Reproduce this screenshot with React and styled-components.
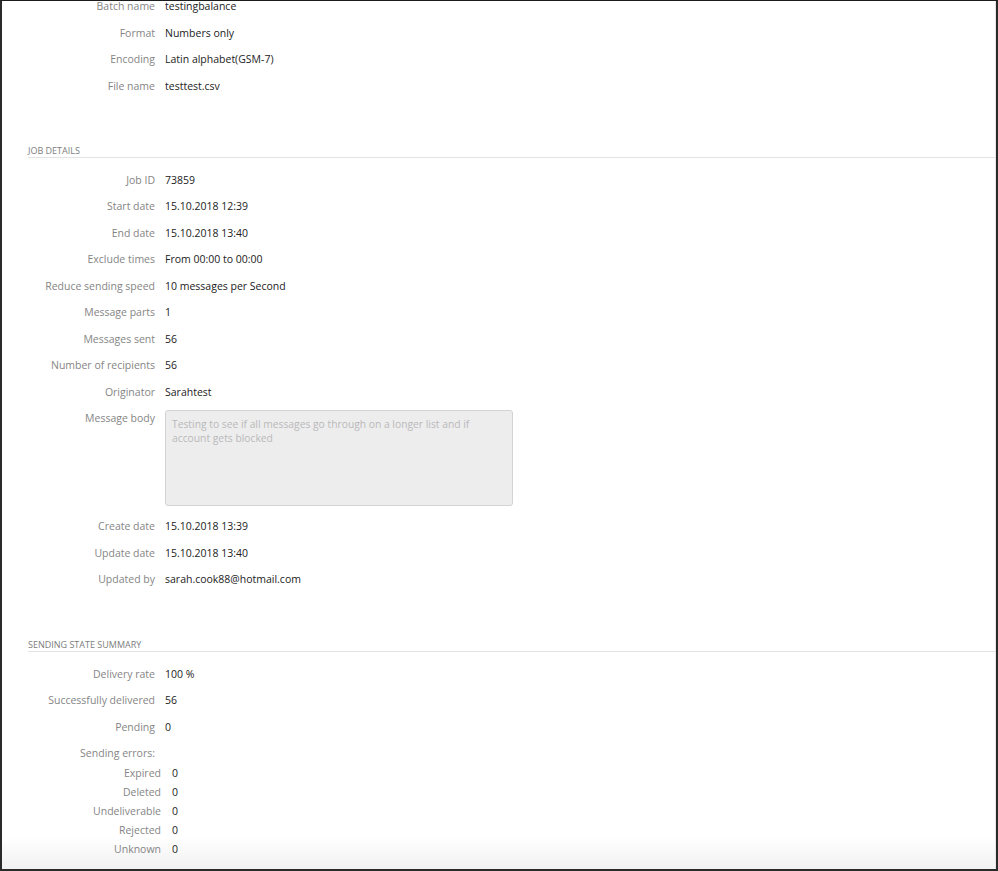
import styled, { createGlobalStyle } from "styled-components";

const GlobalStyle = createGlobalStyle`
  html, body {
    margin: 0;
    padding: 0;
    background: #fff;
  }
  body {
    font-family: "Open Sans", "Liberation Sans", Arial, sans-serif;
  }
`;

const Frame = styled.div`
  box-sizing: border-box;
  width: 998px;
  height: 871px;
  overflow: hidden;
  border-top: 1px solid #1c1c1c;
  border-left: 2px solid #2a2a2a;
  border-right: 2px solid #2a2a2a;
  border-bottom: 2px solid #2a2a2a;
  box-shadow: inset -1px 0 0 #e6e6e6;
  background: linear-gradient(to bottom, #fff calc(100% - 32px), #f1f1f1);
`;

const Content = styled.div`
  margin-top: -8px;
`;

const Section = styled.div`
  margin-top: ${(p) => p.$gap || 0}px;
`;

const SectionTitle = styled.div`
  margin-left: 26px;
  font-size: 9px;
  line-height: 12px;
  color: #7d7d7d;
  text-transform: uppercase;
  padding-top: 1px;
  border-bottom: 1px solid #e3e3e3;
  margin-bottom: 8.75px;
`;

const Row = styled.div`
  display: flex;
  align-items: flex-start;
  gap: 10px;
  padding: 5px 0 ${(p) => (p.$tight ? 0 : 5)}px;
  font-size: 10.5px;
  line-height: 16.5px;
`;

const Label = styled.div`
  width: 153px;
  flex: none;
  text-align: right;
  color: #858585;
`;

const Value = styled.div`
  color: #222;
`;

const SubRow = styled.div`
  display: flex;
  gap: 11px;
  height: 19px;
  align-items: center;
  font-size: 10.5px;
  line-height: 16px;
`;

const SubLabel = styled.div`
  width: 159px;
  flex: none;
  text-align: right;
  color: #858585;
`;

const SubList = styled.div`
  padding-top: 1.5px;
`;

const Body = styled.textarea`
  box-sizing: border-box;
  width: 348px;
  height: 96px;
  margin: 0 0 2px;
  padding: 6px 6px;
  border: 1px solid #d3d3d3;
  border-radius: 3px;
  background: #ededee;
  color: #b9b9b9;
  font-family: "Open Sans", "Liberation Sans", Arial, sans-serif;
  font-size: 10.3px;
  line-height: 14px;
  resize: none;
  outline: none;
`;

const batch = [
  ["Batch name", "testingbalance"],
  ["Format", "Numbers only"],
  ["Encoding", "Latin alphabet(GSM-7)"],
  ["File name", "testtest.csv"],
];

const jobTop = [
  ["Job ID", "73859"],
  ["Start date", "15.10.2018 12:39"],
  ["End date", "15.10.2018 13:40"],
  ["Exclude times", "From 00:00 to 00:00"],
  ["Reduce sending speed", "10 messages per Second"],
  ["Message parts", "1"],
  ["Messages sent", "56"],
  ["Number of recipients", "56"],
  ["Originator", "Sarahtest"],
];

const jobBottom = [
  ["Create date", "15.10.2018 13:39"],
  ["Update date", "15.10.2018 13:40"],
  ["Updated by", "sarah.cook88@hotmail.com"],
];

const summary = [
  ["Delivery rate", "100 %"],
  ["Successfully delivered", "56"],
  ["Pending", "0"],
];

const errors = [
  ["Expired", "0"],
  ["Deleted", "0"],
  ["Undeliverable", "0"],
  ["Rejected", "0"],
  ["Unknown", "0"],
];

function Rows({ items }) {
  return items.map(([label, value]) => (
    <Row key={label}>
      <Label>{label}</Label>
      <Value>{value}</Value>
    </Row>
  ));
}

export default function App() {
  return (
    <>
      <GlobalStyle />
      <Frame>
        <Content>
          {/* batch info */}
          <Section>
            <Rows items={batch} />
          </Section>

          {/* job details */}
          <Section $gap={45}>
            <SectionTitle>Job details</SectionTitle>
            <Rows items={jobTop} />
            <Row>
              <Label>Message body</Label>
              <Body
                readOnly
                defaultValue="Testing to see if all messages go through on a longer list and if account gets blocked"
              />
            </Row>
            <Rows items={jobBottom} />
          </Section>

          {/* sending state */}
          <Section $gap={45}>
            <SectionTitle>Sending state summary</SectionTitle>
            <Rows items={summary} />
            <Row $tight>
              <Label>Sending errors:</Label>
            </Row>
            <SubList>
              {errors.map(([label, value]) => (
                <SubRow key={label}>
                  <SubLabel>{label}</SubLabel>
                  <Value>{value}</Value>
                </SubRow>
              ))}
            </SubList>
          </Section>
        </Content>
      </Frame>
    </>
  );
}
